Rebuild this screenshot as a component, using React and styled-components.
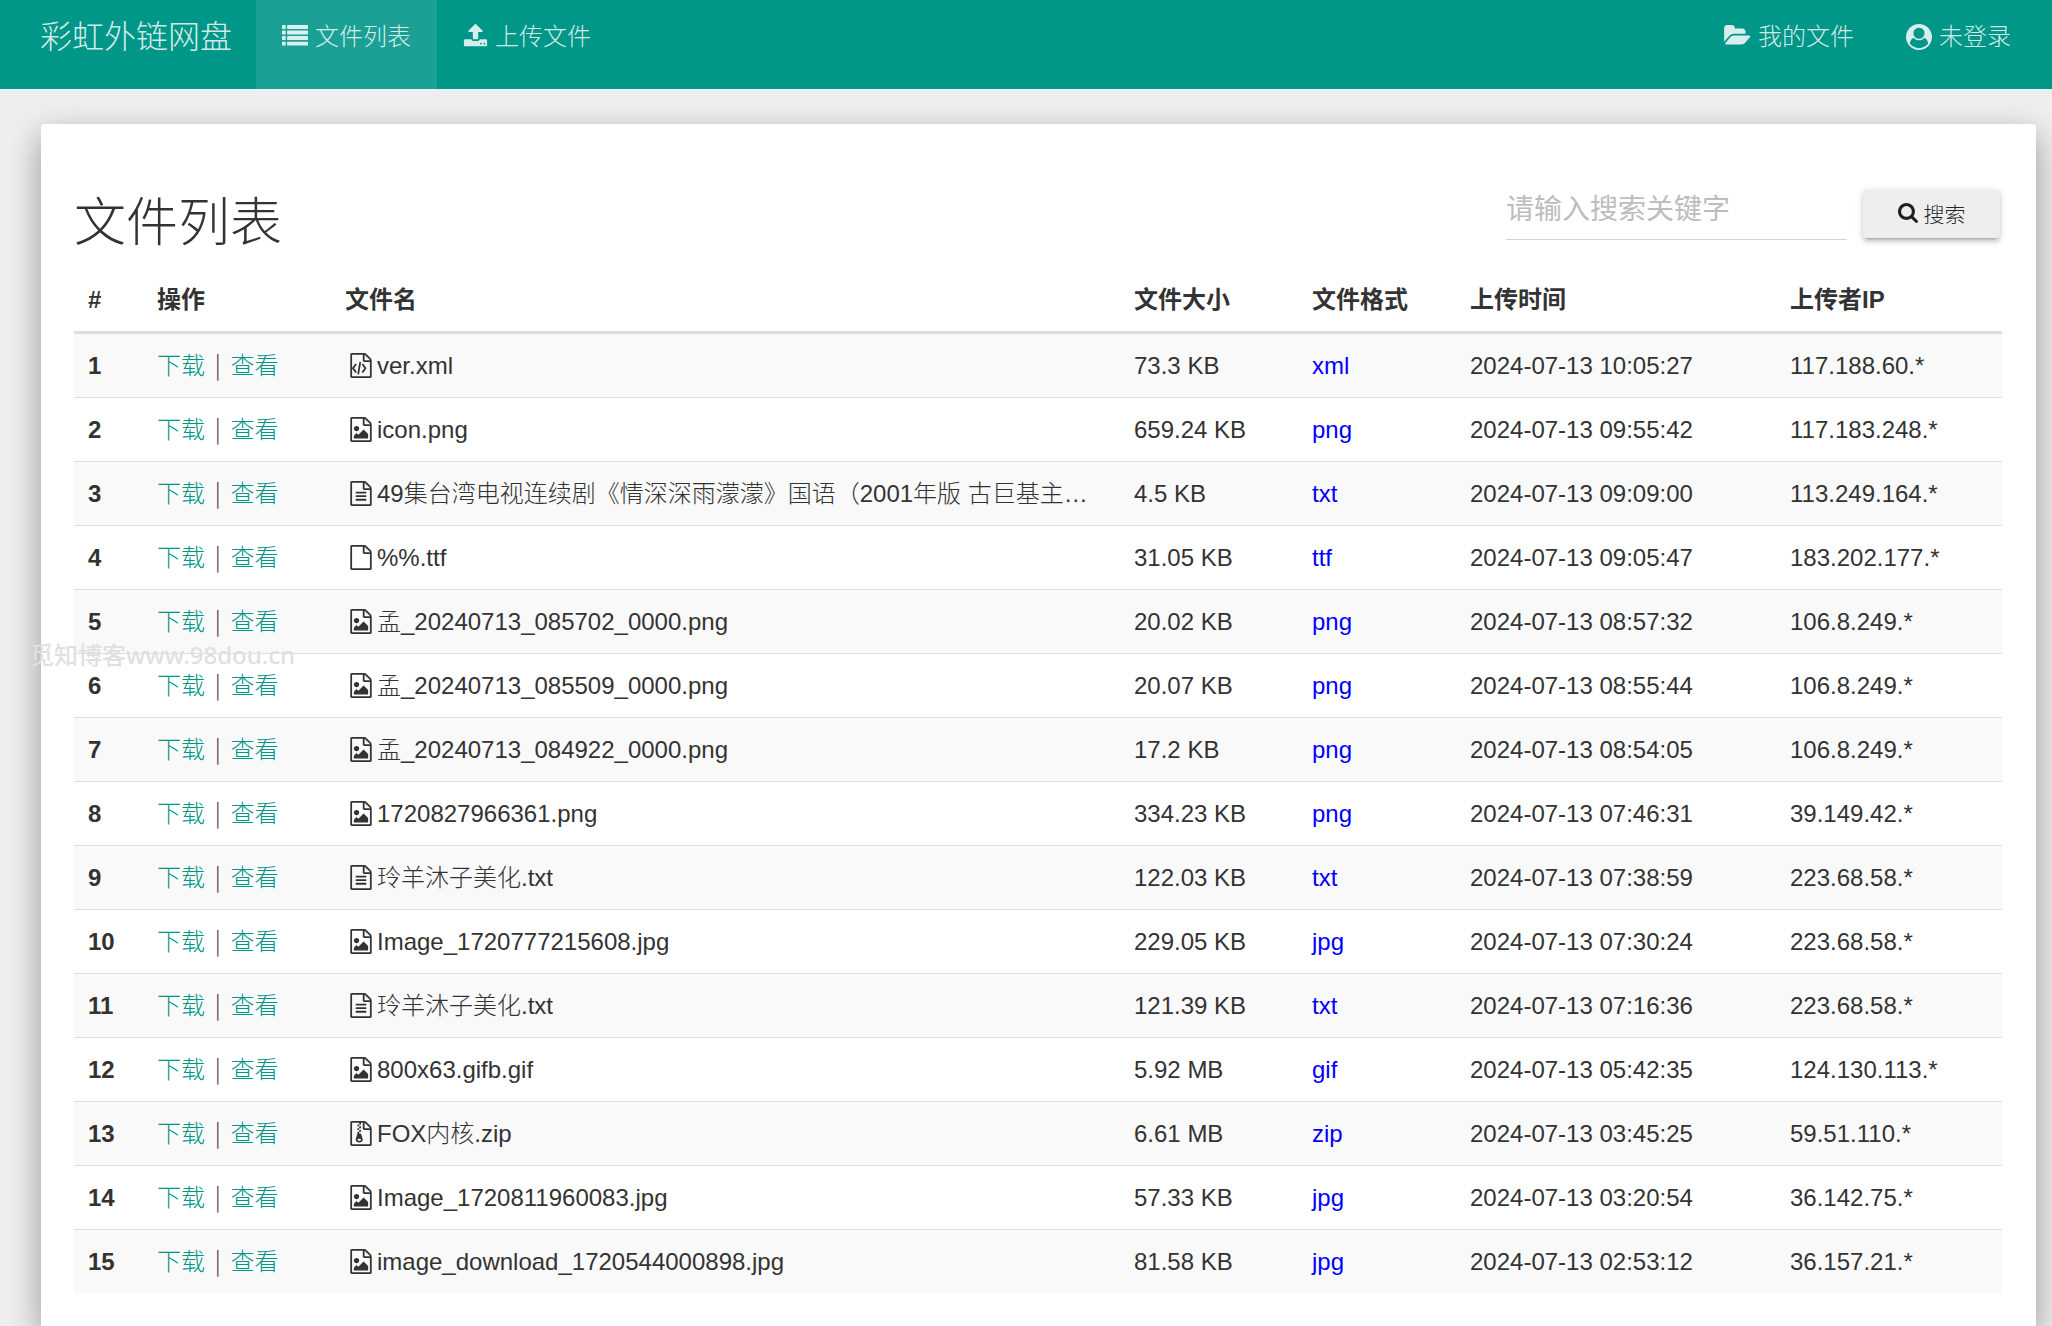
import React, { useState } from 'react';
import styled, { createGlobalStyle } from 'styled-components';

const GlobalStyle = createGlobalStyle`
* {
  box-sizing: border-box;
}
body {
  margin: 0;
  background: #eee;
  color: #333;
  font-family: "Liberation Sans", "Noto Sans CJK SC", sans-serif;
  font-size: 24px;
  font-weight: 300;
  line-height: 35px;
}
a {
  text-decoration: none;
}
`;

const Page = styled.div`
display: flex;
flex-direction: column;
min-height: 100vh;
`;

const Navbar = styled.nav`
display: flex;
align-items: stretch;
padding: 0 15px;
background: #009688;
`;

const NavLink = styled.a`
display: flex;
align-items: flex-start;
gap: 7px;
padding: 19px 26px 35px;
color: rgba(255, 255, 255, 0.84);
background: ${({ $active }) => ($active ? 'rgba(255, 255, 255, 0.1)' : 'transparent')};

svg {
  margin-top: 5px;
}
`;

const Brand = styled(NavLink)`
padding: 19px 24px 33px 25px;
font-size: 32px;
line-height: 37px;
`;

const NavRight = styled.div`
display: flex;
margin-left: auto;
`;

const Card = styled.main`
flex: 1;
margin: 35px 16px 0 41px;
padding: 58px 34px 33px 33px;
background: #fff;
border-radius: 4px 4px 0 0;
box-shadow: 0 14px 30px rgba(0, 0, 0, 0.2), 0 10px 35px rgba(0, 0, 0, 0.19);
`;

const CardHeader = styled.header`
display: flex;
justify-content: space-between;
align-items: flex-start;
height: 86px;
`;

const Title = styled.h2`
margin: 0;
padding-top: 12px;
font-size: 52px;
font-weight: 300;
line-height: 58px;
`;

const SearchForm = styled.form`
display: flex;
align-items: flex-start;
gap: 16px;
padding: 7px 2px 0 0;
`;

const SearchInput = styled.input`
width: 341px;
height: 51px;
padding: 0 0 8px;
border: none;
border-bottom: 1px solid #d2d2d2;
outline: none;
background: none;
color: #333;
font: 400 28px "Liberation Sans", "Noto Sans CJK SC", sans-serif;

&::placeholder {
  color: #bdbdbd;
  opacity: 1;
}
`;

const SearchButton = styled.button`
display: flex;
align-items: center;
justify-content: center;
gap: 6px;
width: 137px;
height: 49px;
padding: 0 0 2px;
border: none;
border-radius: 4px;
background: #eee;
color: rgba(0, 0, 0, 0.87);
box-shadow: 0 4px 4px rgba(0, 0, 0, 0.14), 0 5px 2px -4px rgba(0, 0, 0, 0.2), 0 2px 9px rgba(0, 0, 0, 0.12);
font: 300 21px "Liberation Sans", "Noto Sans CJK SC", sans-serif;
cursor: pointer;
`;

const Table = styled.table`
width: 100%;
table-layout: fixed;
border-collapse: separate;
border-spacing: 0;
text-align: left;
`;

const HeadCell = styled.th`
width: ${({ $width }) => $width};
padding: 14px;
border-bottom: 3px solid #ddd;
font-weight: 700;
white-space: nowrap;
`;

const Row = styled.tr`
&:nth-of-type(odd) {
  background: #f9f9f9;
}
&:not(:first-of-type) > * {
  border-top: 1px solid #ddd;
}
`;

const RowNumber = styled.th`
padding: 14px;
font-weight: 700;
`;

const Cell = styled.td`
padding: 14px;
overflow: hidden;
text-overflow: ellipsis;
white-space: nowrap;
`;

const ActionLink = styled.a`
color: #009688;
`;

const Separator = styled.span`
margin: 0 3px;
font-family: "Noto Sans CJK SC", sans-serif;
line-height: 1;
`;

const Format = styled.span`
color: #00f;
`;

const FileIcon = styled.svg`
width: 32px;
height: 25px;
vertical-align: -4px;
fill: currentColor;
`;

const GlyphIcon = styled.svg`
flex: none;
width: ${({ $width }) => $width};
height: ${({ $height }) => $height};
fill: currentColor;
`;

const Watermark = styled.div`
position: absolute;
top: 637px;
left: 30px;
color: #e0e0e0;
font-family: "Noto Sans", "Noto Sans CJK SC", sans-serif;
font-weight: 500;
pointer-events: none;
`;

const outline =
  'M1596 380q28 28 48 76t20 88v1152q0 40-28 68t-68 28h-1344q-40 0-68-28t-28-68v-1600q0-40 28-68t68-28h896q40 0 88 20t76 48zm-444-244v376h376q-10-29-22-41l-313-313q-12-12-41-22zm384 1528v-1024h-416q-40 0-68-28t-28-68v-416h-768v1536h1280z';

const filePaths = {
  file: outline,
  text: `${outline}M512 800q0-14 9-23t23-9h704q14 0 23 9t9 23v64q0 14-9 23t-23 9h-704q-14 0-23-9t-9-23v-64zm736 224q14 0 23 9t9 23v64q0 14-9 23t-23 9h-704q-14 0-23-9t-9-23v-64q0-14 9-23t23-9h704zm0 256q14 0 23 9t9 23v64q0 14-9 23t-23 9h-704q-14 0-23-9t-9-23v-64q0-14 9-23t23-9h704z`,
  image: `${outline}M1408 1216v320h-1024v-192l192-192 128 128 384-384zM576 1024q-80 0-136-56t-56-136 56-136 136-56 136 56 56 136-56 136-136 56z`,
  code: `${outline}M480 768q8-11 21-12.500t24 6.500l51 38q11 8 12.500 21t-6.500 24l-182 243 182 243q8 11 6.500 24t-12.500 21l-51 38q-11 8-24 6.500t-21-12.500l-226-301q-14-19 0-38zm802 301q14 19 0 38l-226 301q-8 11-21 12.500t-24-6.500l-51-38q-11-8-12.500-21t6.500-24l182-243-182-243q-8-11-6.500-24t12.500-21l51-38q11-8 24-6.500t21 12.500zm-620 461q-13-2-20.500-13t-5.500-24l138-831q2-13 13-20.500t24-5.500l63 10q13 2 20.500 13t5.500 24l-138 831q-2 13-13 20.500t-24 5.500z`,
  archive:
    'M768 384v-128h-128v128h128zm128 128v-128h-128v128h128zm-128 128v-128h-128v128h128zm128 128v-128h-128v128h128zm700-388q28 28 48 76t20 88v1152q0 40-28 68t-68 28h-1344q-40 0-68-28t-28-68v-1600q0-40 28-68t68-28h896q40 0 88 20t76 48zm-444-244v376h376q-10-29-22-41l-313-313q-12-12-41-22zm384 1528v-1024h-416q-40 0-68-28t-28-68v-416h-128v128h-128v-128h-512v1536h1280zm-627-721l107 349q8 27 8 52 0 83-72.500 137.500t-183.500 54.500-183.500-54.500-72.500-137.500q0-25 8-52 21-63 120-396v-128h128v128h79q22 0 39 13t23 34zm-141 465q53 0 90.500-19t37.500-45-37.500-45-90.500-19-90.500 19-37.500 45 37.500 45 90.500 19z',
};

const iconByFormat = {
  xml: 'code',
  png: 'image',
  jpg: 'image',
  gif: 'image',
  txt: 'text',
  zip: 'archive',
};

const ListIcon = () => (
  <GlyphIcon $width="26px" $height="26px" viewBox="0 0 1792 1792" aria-hidden="true">
    {[64, 448, 832, 1216].map(y => (
      <g key={y}>
        <rect x="0" y={y} width="256" height="272" rx="32" />
        <rect x="352" y={y} width="1440" height="272" rx="32" />
      </g>
    ))}
  </GlyphIcon>
);

const UploadIcon = () => (
  <GlyphIcon $width="25px" $height="25px" viewBox="64 64 1664 1792" aria-hidden="true">
    <path d="M1344 1472q0-26-19-45t-45-19-45 19-19 45 19 45 45 19 45-19 19-45zm256 0q0-26-19-45t-45-19-45 19-19 45 19 45 45 19 45-19 19-45zm128-224v320q0 40-28 68t-68 28h-1472q-40 0-68-28t-28-68v-320q0-40 28-68t68-28h427q21 56 70.500 92t110.500 36h256q61 0 110.500-36t70.500-92h427q40 0 68 28t28 68zm-325-648q-17 40-59 40h-256v448q0 26-19 45t-45 19h-256q-26 0-45-19t-19-45v-448h-256q-42 0-59-40-17-39 14-69l448-448q18-19 45-19t45 19l448 448q31 30 14 69z" />
  </GlyphIcon>
);

const FolderIcon = () => (
  <GlyphIcon $width="27px" $height="25px" viewBox="0 64 1920 1792" aria-hidden="true">
    <path d="M1879 952q0 31-31 66l-336 396q-43 51-120.500 86.500t-143.500 35.500h-1088q-34 0-60.500-13t-26.500-43q0-31 31-66l336-396q43-51 120.500-86.500t143.500-35.500h1088q34 0 60.500 13t26.500 43zm-343-344v160h-832q-94 0-197 47.500t-164 119.500l-337 396-5 6q0-4-.5-12.500t-.5-12.500v-960q0-92 66-158t158-66h320q92 0 158 66t66 158v32h544q92 0 158 66t66 158z" />
  </GlyphIcon>
);

const UserIcon = () => (
  <GlyphIcon $width="26px" $height="26px" viewBox="0 0 1792 1792" aria-hidden="true">
    <path
      fillRule="evenodd"
      d="M1523 1339q-22-155-87.500-257.500t-184.500-118.500q-67 74-159.500 115.500t-195.500 41.500-195.500-41.500-159.500-115.500q-119 16-184.500 118.500t-87.500 257.500q106 150 271 237.500t356 87.500 356-87.500 271-237.500zm-243-699q0-159-112.500-271.500t-271.500-112.500-271.500 112.500-112.500 271.500 112.500 271.500 271.500 112.500 271.500-112.500 112.500-271.500zm512 256q0 182-71 347.500t-190.500 286-285.500 191.500-349 71-348-71-286-191-191-286-71-348 71-348 191-286 286-191 348-71 348 71 286 191 191 286 71 348z"
    />
  </GlyphIcon>
);

const SearchIcon = () => (
  <GlyphIcon $width="20px" $height="20px" viewBox="64 128 1664 1664" aria-hidden="true">
    <path d="M1216 832q0-185-131.500-316.500t-316.500-131.500-316.500 131.500-131.500 316.500 131.500 316.500 316.500 131.500 316.500-131.500 131.500-316.500zm512 832q0 52-38 90t-90 38q-54 0-90-38l-343-342q-179 124-399 124-143 0-273.500-55.500t-225-150-150-225-55.500-273.500 55.500-273.500 150-225 225-150 273.500-55.500 273.500 55.500 225 150 150 225 55.500 273.500q0 220-124 399l343 343q37 37 37 90z" />
  </GlyphIcon>
);

const columns = [
  { title: '#', width: '69px' },
  { title: '操作', width: '188px' },
  { title: '文件名', width: 'auto' },
  { title: '文件大小', width: '178px' },
  { title: '文件格式', width: '158px' },
  { title: '上传时间', width: '320px' },
  { title: '上传者IP', width: '226px' },
];

const files = [
  { name: 'ver.xml', size: '73.3 KB', format: 'xml', time: '2024-07-13 10:05:27', ip: '117.188.60.*' },
  { name: 'icon.png', size: '659.24 KB', format: 'png', time: '2024-07-13 09:55:42', ip: '117.183.248.*' },
  { name: '49集台湾电视连续剧《情深深雨濛濛》国语（2001年版 古巨基主…', size: '4.5 KB', format: 'txt', time: '2024-07-13 09:09:00', ip: '113.249.164.*' },
  { name: '%%.ttf', size: '31.05 KB', format: 'ttf', time: '2024-07-13 09:05:47', ip: '183.202.177.*' },
  { name: '孟_20240713_085702_0000.png', size: '20.02 KB', format: 'png', time: '2024-07-13 08:57:32', ip: '106.8.249.*' },
  { name: '孟_20240713_085509_0000.png', size: '20.07 KB', format: 'png', time: '2024-07-13 08:55:44', ip: '106.8.249.*' },
  { name: '孟_20240713_084922_0000.png', size: '17.2 KB', format: 'png', time: '2024-07-13 08:54:05', ip: '106.8.249.*' },
  { name: '1720827966361.png', size: '334.23 KB', format: 'png', time: '2024-07-13 07:46:31', ip: '39.149.42.*' },
  { name: '玲羊沐子美化.txt', size: '122.03 KB', format: 'txt', time: '2024-07-13 07:38:59', ip: '223.68.58.*' },
  { name: 'Image_1720777215608.jpg', size: '229.05 KB', format: 'jpg', time: '2024-07-13 07:30:24', ip: '223.68.58.*' },
  { name: '玲羊沐子美化.txt', size: '121.39 KB', format: 'txt', time: '2024-07-13 07:16:36', ip: '223.68.58.*' },
  { name: '800x63.gifb.gif', size: '5.92 MB', format: 'gif', time: '2024-07-13 05:42:35', ip: '124.130.113.*' },
  { name: 'FOX内核.zip', size: '6.61 MB', format: 'zip', time: '2024-07-13 03:45:25', ip: '59.51.110.*' },
  { name: 'Image_1720811960083.jpg', size: '57.33 KB', format: 'jpg', time: '2024-07-13 03:20:54', ip: '36.142.75.*' },
  { name: 'image_download_1720544000898.jpg', size: '81.58 KB', format: 'jpg', time: '2024-07-13 02:53:12', ip: '36.157.21.*' },
];

const App = () => {
  const [keyword, setKeyword] = useState('');

  return (
    <>
      <GlobalStyle />
      <Page>
        <Navbar>
          <Brand href="#">彩虹外链网盘</Brand>
          <NavLink href="#" $active>
            <ListIcon />
            文件列表
          </NavLink>
          <NavLink href="#">
            <UploadIcon />
            上传文件
          </NavLink>
          <NavRight>
            <NavLink href="#">
              <FolderIcon />
              我的文件
            </NavLink>
            <NavLink href="#">
              <UserIcon />
              未登录
            </NavLink>
          </NavRight>
        </Navbar>
        <Card>
          <CardHeader>
            <Title>文件列表</Title>
            <SearchForm onSubmit={e => e.preventDefault()}>
              <SearchInput
                type="text"
                aria-label="搜索关键字"
                placeholder="请输入搜索关键字"
                value={keyword}
                onChange={e => setKeyword(e.target.value)}
              />
              <SearchButton type="submit">
                <SearchIcon />
                搜索
              </SearchButton>
            </SearchForm>
          </CardHeader>
          <Table>
            <thead>
              <tr>
                {columns.map(({ title, width }) => (
                  <HeadCell key={title} scope="col" $width={width}>
                    {title}
                  </HeadCell>
                ))}
              </tr>
            </thead>
            <tbody>
              {files.map((file, index) => (
                <Row key={file.time}>
                  <RowNumber scope="row">{index + 1}</RowNumber>
                  <Cell>
                    <ActionLink href="#">下载</ActionLink> <Separator>|</Separator> <ActionLink href="#">查看</ActionLink>
                  </Cell>
                  <Cell>
                    <FileIcon viewBox="0 0 1792 1792" aria-hidden="true">
                      <path d={filePaths[iconByFormat[file.format] || 'file']} />
                    </FileIcon>
                    {file.name}
                  </Cell>
                  <Cell>{file.size}</Cell>
                  <Cell>
                    <Format>{file.format}</Format>
                  </Cell>
                  <Cell>{file.time}</Cell>
                  <Cell>{file.ip}</Cell>
                </Row>
              ))}
            </tbody>
          </Table>
        </Card>
      </Page>
      <Watermark>觅知博客www.98dou.cn</Watermark>
    </>
  );
};

export default App;
